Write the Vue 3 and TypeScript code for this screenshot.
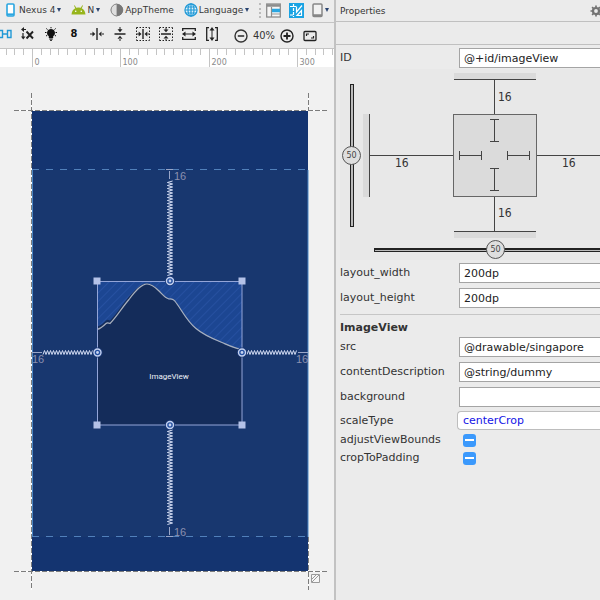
<script setup lang="ts">
import { ref } from 'vue'

interface Field {
  id: string
  label: string
  value: string
}

const componentId = ref('@+id/imageView')
const layoutFields = ref<Field[]>([
  { id: 'layout-width', label: 'layout_width', value: '200dp' },
  { id: 'layout-height', label: 'layout_height', value: '200dp' },
])
const viewFields = ref<Field[]>([
  { id: 'src', label: 'src', value: '@drawable/singapore' },
  { id: 'content-description', label: 'contentDescription', value: '@string/dummy' },
  { id: 'background', label: 'background', value: '' },
])
const flags = [
  { id: 'adjust-view-bounds', label: 'adjustViewBounds' },
  { id: 'crop-to-padding', label: 'cropToPadding' },
]
const scaleType = ref('centerCrop')
const verticalBias = ref(50)
const horizontalBias = ref(50)

// Ruler: ten minor ticks for each hundred dp
const STEP = 8.83
const ticks = Array.from({ length: 38 }, (_, i) => i - 3).map((n) => ({
  x: 32.5 + Math.round(n * STEP),
  major: n % 10 === 0,
  label: n % 10 === 0 ? String(n * 10) : '',
}))

// Zigzag spring between two points of one axis
function spring(from: number, to: number, cross: number, vertical: boolean): string {
  const points: string[] = []
  let side = 1
  for (let p = from; p <= to; p += 1.5) {
    const c = cross + side * (vertical ? 2.6 : 2)
    points.push(vertical ? `${c},${p}` : `${p},${c}`)
    side = -side
  }
  return points.join(' ')
}
const springs = [
  spring(181, 276, 170, true),
  spring(430, 525, 170, true),
  spring(43, 93, 352.5, false),
  spring(247, 297, 352.5, false),
]
const anchors = [
  [170, 281],
  [97.5, 352.5],
  [242, 352.5],
  [170, 425],
]
const corners = [
  [97, 281],
  [242, 281],
  [97, 425],
  [242, 425],
]
</script>

<template>
  <div class="ide">
    <main class="editor">
      <div class="toolbar">
        <button class="tool" type="button">
          <svg width="9" height="14" viewBox="0 0 9 14"><rect x="1" y="1" width="7" height="12" rx="1" fill="#fff" stroke="#2ba6e0" stroke-width="1.6" /><path d="M1 11.4h7" stroke="#2ba6e0" stroke-width="2" /></svg>
          <span class="after-phone">Nexus 4</span><i class="caret"></i>
        </button>
        <button class="tool" type="button">
          <svg width="15" height="10" viewBox="0 0 15 10"><path d="M.5 9.5C.8 6.3 2.200 4.300 4.300 3.200L3 .8l.7-.5L5.200 2.800a7 7 0 0 1 4.600 0L11.300.3l.7.5-1.300 2.400c2.100 1.100 3.500 3.100 3.800 6.300z" fill="#97b51b" /><circle cx="4.700" cy="6.300" r=".8" fill="#fff" /><circle cx="10.300" cy="6.300" r=".8" fill="#fff" /></svg>
          <span>N</span><i class="caret"></i>
        </button>
        <button class="tool" type="button">
          <svg width="14" height="14" viewBox="0 0 14 14"><circle cx="7" cy="7" r="5.800" fill="#b9b9b9" stroke="#8c8c8c" /><path d="M7 1a6 6 0 0 0 0 12z" fill="#dedede" stroke="#8c8c8c" /><path d="M7 1a6 6 0 0 1 0 12z" fill="#777" /></svg>
          <span>AppTheme</span>
        </button>
        <button class="tool" type="button">
          <svg width="14" height="14" viewBox="0 0 15 15" fill="none" stroke="#2199d6" stroke-width="1.300"><circle cx="7.500" cy="7.500" r="6.500" fill="#dff1fb" /><ellipse cx="7.500" cy="7.500" rx="3.200" ry="6.500" /><path d="M7.500 1v13M1 7.500h13M2 4.300h11M2 10.700h11" /></svg>
          <span>Language</span><i class="caret"></i>
        </button>
        <div class="modes">
          <button class="tool" type="button" aria-label="Design view">
            <svg width="15" height="15" viewBox="0 0 15 15"><rect x=".7" y="1" width="13.600" height="13" fill="#f6f6f6" stroke="#8d8d8d" stroke-width="1.300" /><path d="M1 2.500h13" stroke="#8d8d8d" stroke-width="2.500" /><path d="M5.500 4v10" stroke="#8d8d8d" stroke-width="1.200" /><path d="M6 7.500h8" stroke="#2ba6e0" stroke-width="3.500" /><path d="M6 11h8" stroke="#999" /></svg>
          </button>
          <button class="tool" type="button" aria-label="Blueprint view">
            <svg width="15" height="15" viewBox="0 0 15 15"><rect width="15" height="15" fill="#1aa3e3" /><path d="M1 3.500h6M4.500 1v13M1 12h3" fill="none" stroke="#fff" stroke-dasharray="3 1" stroke-width="1.200" /><path d="M7.500 3.500V9L13 2.500M8 12.500l4.500-5v5z" fill="none" stroke="#fff" stroke-width="1.200" /></svg>
          </button>
          <button class="tool" type="button" aria-label="Orientation">
            <svg width="11" height="15" viewBox="0 0 11 15"><rect x="1" y="1" width="9" height="12.500" rx="1" fill="#f1f1f1" stroke="#868686" stroke-width="1.500" /><path d="M1 12.500h9" stroke="#868686" stroke-width="2.500" /></svg>
            <i class="caret"></i>
          </button>
        </div>
      </div>

      <div class="toolbar actions">
        <button class="tool" type="button" aria-label="Show constraints">
          <svg width="12" height="12" viewBox="0 0 12 12" fill="none" stroke="#2199d6" stroke-width="1.400"><path d="M-1 2.500h3.500v7H-1M7.500 2.500h3.500v7H7.500zM2.500 6h5" /></svg>
        </button>
        <button class="tool" type="button" aria-label="Clear constraints">
          <svg width="14" height="14" viewBox="0 0 14 14" fill="none" stroke="#222"><path d="M5.500 4.500l6.500 7M12 4.500l-6.500 7" stroke-width="1.900" /><path d="M1.500 2.500h3.500M2 6v4" stroke-width="1.200" /><path d="M3 0v5L0 2.500zM0 9.500h4.500L2.200 12.500z" fill="#222" stroke="none" /></svg>
        </button>
        <button class="tool" type="button" aria-label="Infer constraints">
          <svg width="14" height="14" viewBox="0 0 14 14"><path d="M7 2a4 4 0 0 0-2.200 7.300V11h4.400V9.300A4 4 0 0 0 7 2z" fill="#111" /><path d="M5.200 12h3.600M6 13.300h2M7 0v1.300M1 5.500h1.500M11.500 5.500H13M2.300 1.500l1.200 1M11.700 1.500l-1.200 1M2 9l1.200-.7M12 9l-1.200-.7" stroke="#111" /></svg>
        </button>
        <button class="tool margin" type="button">8</button>
        <button class="tool" type="button" aria-label="Center horizontally">
          <svg width="14" height="14" viewBox="0 0 14 14" fill="#222"><path d="M6.300 1h1.400v12H6.300zM0 6.500h3v1H0zM11 6.500h3v1h-3zM2.500 4.500L5.300 7l-2.800 2.500zM11.500 4.500L8.700 7l2.800 2.500z" /></svg>
        </button>
        <button class="tool" type="button" aria-label="Center vertically">
          <svg width="14" height="14" viewBox="0 0 14 14" fill="#222"><path d="M1.500 6.300h11v1.400h-11zM6.500 0h1v3h-1zM6.500 11h1v3h-1zM4.500 2.300h5L7 5.200zM4.500 11.700h5L7 8.800z" /></svg>
        </button>
        <button class="tool" type="button" aria-label="Center horizontally in parent">
          <svg width="14" height="14" viewBox="0 0 14 14" fill="#222"><path d="M.5 .5h13M.5 13.500h13M.5 .5v13M13.500 .5v13" stroke="#222" stroke-dasharray="1.500 1.500" /><path d="M6.300 2h1.400v10H6.300zM1 6.500h2v1H1zM11 6.500h2v1h-2zM2.700 4.500L5.500 7 2.700 9.500zM11.300 4.500L8.500 7l2.800 2.500z" /></svg>
        </button>
        <button class="tool" type="button" aria-label="Center vertically in parent">
          <svg width="14" height="14" viewBox="0 0 14 14" fill="#222"><path d="M.5 .5h13M.5 13.500h13M.5 .5v13M13.500 .5v13" stroke="#222" stroke-dasharray="1.500 1.500" /><path d="M2 6.300h10v1.400H2zM6.500 1h1v2h-1zM6.500 11h1v2h-1zM4.500 2.500h5L7 5.300zM4.500 11.500h5L7 8.700z" /></svg>
        </button>
        <button class="tool" type="button" aria-label="Expand horizontally">
          <svg width="14" height="14" viewBox="0 0 14 14"><path d="M.7 4V1.700h12.600V4M.7 10v2.300h12.600V10" fill="none" stroke="#222" stroke-width="1.300" /><path d="M0 7l3.500-2.500v2h7v-2L14 7l-3.500 2.500v-2h-7v2z" fill="#222" /></svg>
        </button>
        <button class="tool" type="button" aria-label="Expand vertically">
          <svg width="14" height="16" viewBox="0 0 14 16"><path d="M4 1.700H1.700v12.600H4M10 1.700h2.300v12.600H10" fill="none" stroke="#222" stroke-width="1.300" /><path d="M7 1l2.500 3.500h-2v7h2L7 15l-2.500-3.500h2v-7h-2z" fill="#222" /></svg>
        </button>
        <div class="zoom">
          <button class="tool" type="button" aria-label="Zoom out">
            <svg width="14" height="14" viewBox="0 0 14 14" fill="none" stroke="#333"><circle cx="7" cy="7" r="6" stroke-width="1.400" /><path d="M3.800 7h6.400" stroke-width="1.600" /></svg>
          </button>
          <span>40%</span>
          <button class="tool" type="button" aria-label="Zoom in">
            <svg width="14" height="14" viewBox="0 0 14 14" fill="none" stroke="#222"><circle cx="7" cy="7" r="6" stroke-width="1.400" /><path d="M3.500 7h7M7 3.500v7" stroke-width="1.800" /></svg>
          </button>
          <button class="tool fit" type="button" aria-label="Zoom to fit">
            <svg width="14" height="12" viewBox="0 0 14 12" fill="none" stroke="#222"><rect x="1" y="1.500" width="12" height="9" rx="1" stroke-width="1.300" /><path d="M3.500 6V4h2.500M10.500 6v2H8" stroke-width="1.200" /></svg>
          </button>
        </div>
      </div>

      <div class="ruler">
        <svg width="334" height="18" viewBox="0 0 334 18">
          <template v-for="t in ticks" :key="t.x">
            <path :d="`M${t.x} 0v${t.major ? 18 : 6}`" stroke="#c4c4c4" />
            <text v-if="t.label" :x="t.x + 2" y="16" class="ruler-label">{{ t.label }}</text>
          </template>
        </svg>
      </div>

      <div class="canvas">
        <svg width="334" height="533" viewBox="0 67 334 533">
          <defs>
            <pattern id="hatch" width="6" height="6" patternUnits="userSpaceOnUse" patternTransform="rotate(45)">
              <rect width="6" height="6" fill="#1c4692" />
              <path d="M.5 0v6" stroke="#2650a0" stroke-width="1" />
            </pattern>
          </defs>
          <rect x="32" y="111" width="276" height="460" fill="#143470" />
          <rect x="32" y="170" width="276" height="367" fill="#18376f" />
          <path d="M32.500 170v367M308 170v367" stroke="#4a86c4" />
          <path d="M32 169.500h276M32 536.500h276" stroke="#5180ba" stroke-dasharray="7 7" />
          <path d="M14 110.500h313M14 571.500h313M31.500 93v497M308.500 93v18M308.500 537v53" stroke="#fff" />
          <path d="M14 110.500h313M14 571.500h313M31.500 93v497M308.500 93v18M308.500 537v53" stroke="#7c7c7c" stroke-dasharray="5 2" />

          <rect x="97" y="281" width="145" height="144" fill="#142c5a" />
          <path d="M97 281h145v69c-7-1-13-4-20-7-10-4-19-8-26-14-9-7-14-18-20-26-2-3-4-4-7-3.500-4-1-6-5-10-9-4-4-8-7-12-7-6 0-12 6-18 13-7 8-12 17-19 24-2-1-3-1-4 0-3 3-5 5-9 6z" fill="url(#hatch)" />
          <path d="M97 329.500c4-1 6-3 9-6 1-1 2-1 4 0 7-7 12-16 19-24 6-8 12-15.500 18-15.500 4 0 8 3 12 7s6 7 10 8c3-.5 5 .5 7 3.500 6 8 11 19 20 26 7 6 16 10 26 14 7 3 13 6 20 7" fill="none" stroke="#a9b0bd" stroke-width="1.200" />
          <rect x="97.500" y="281.500" width="144.500" height="143.500" fill="none" stroke="#93a5d8" />
          <text x="169" y="379" text-anchor="middle" class="view-name">ImageView</text>

          <polyline v-for="s in springs" :key="s" :points="s" fill="none" stroke="#d3dcf3" stroke-width="1" />
          <path d="M169.500 171v8M169.500 527v8M32 352.500h10M298 352.500h10M166 169.500h7M166 536.500h7" stroke="#9aa6c8" />
          <text x="174" y="180" class="distance">16</text>
          <text x="174" y="536" class="distance">16</text>
          <text x="32" y="363" class="distance">16</text>
          <text x="296" y="363" class="distance">16</text>

          <rect v-for="[x, y] in corners" :key="`c${x}-${y}`" :x="x - 3.500" :y="y - 3.500" width="7" height="7" fill="#b4c2e8" />
          <g v-for="[x, y] in anchors" :key="`a${x}-${y}`">
            <circle :cx="x" :cy="y" r="5" fill="#1c3a78" />
            <circle :cx="x" :cy="y" r="3.500" fill="#2450a0" stroke="#c5d2f0" stroke-width="1.400" />
            <circle :cx="x" :cy="y" r="1.400" fill="#c5d2f0" />
          </g>

          <path d="M311.500 574.500h8v8h-8zM312 582l7-7M312 579l4-4" fill="#f6f6f6" stroke="#9a9a9a" />
        </svg>
      </div>
    </main>

    <aside class="properties">
      <header class="title">
        <h1>Properties</h1>
        <button class="tool" type="button" aria-label="Settings">
          <svg width="12" height="12" viewBox="0 0 12 12"><circle cx="6" cy="6" r="3" fill="none" stroke="#737373" stroke-width="2.200" /><path d="M6 .5v2M6 9.500v2M.5 6h2M9.500 6h2M2.100 2.100l1.400 1.400M8.500 8.500l1.400 1.400M2.100 9.900l1.400-1.400M8.500 3.500l1.400-1.400" stroke="#737373" stroke-width="1.700" /></svg>
        </button>
      </header>
      <div class="search-strip"></div>

      <form class="form" @submit.prevent>
        <div class="row">
          <label for="component-id">ID</label>
          <input id="component-id" v-model="componentId" type="text" />
        </div>

        <div class="constraints">
          <div class="bias vertical">
            <input v-model.number="verticalBias" type="range" min="0" max="100" aria-label="Vertical bias" />
            <output :style="{ top: verticalBias + '%' }">{{ verticalBias }}</output>
          </div>
          <div class="inspector">
            <svg width="264" height="168" viewBox="362 72 264 168">
              <path d="M363 114h6v83h-6zM454 73h82v6h-82zM454 232h82v6h-82zM621 114h6v83h-6z" fill="#dadada" />
              <rect x="453.500" y="114.500" width="83" height="82" fill="#dbdbdb" stroke="#666" />
              <path d="M369.500 114v83M454 79.500h82M454 231.500h82M369 155.500h84M537 155.500h84M494.500 80v34M494.500 197v34" stroke="#444" />
              <path d="M490 119.500h9M494.500 119v22M490 141.500h9M490 168.500h9M494.500 168v22M490 190.500h9M459.500 151v9M459 155.500h22M481.500 151v9M507.500 151v9M507 155.500h22M529.500 151v9" stroke="#444" />
              <text x="498" y="101" class="margin-value">16</text>
              <text x="498" y="217" class="margin-value">16</text>
              <text x="395" y="167" class="margin-value">16</text>
              <text x="562" y="167" class="margin-value">16</text>
            </svg>
            <div class="bias horizontal">
              <input v-model.number="horizontalBias" type="range" min="0" max="100" aria-label="Horizontal bias" />
              <output :style="{ left: horizontalBias + '%' }">{{ horizontalBias }}</output>
            </div>
          </div>
        </div>

        <div class="fields">
          <div v-for="f in layoutFields" :key="f.id" class="row">
            <label :for="f.id">{{ f.label }}</label>
            <input :id="f.id" v-model="f.value" type="text" />
          </div>
        </div>

        <hr />
        <h2>ImageView</h2>

        <div class="fields">
          <div v-for="f in viewFields" :key="f.id" class="row">
            <label :for="f.id">{{ f.label }}</label>
            <input :id="f.id" v-model="f.value" type="text" />
          </div>
        </div>
        <div class="row choice">
          <label for="scale-type">scaleType</label>
          <select id="scale-type" v-model="scaleType">
            <option>centerCrop</option>
          </select>
        </div>
        <div v-for="f in flags" :key="f.id" class="row flag">
          <label :for="f.id">{{ f.label }}</label>
          <input :id="f.id" type="checkbox" :indeterminate="true" />
        </div>
      </form>
    </aside>
  </div>
</template>

<style>
body {
  background: #f1f1f1;
}
</style>

<style scoped>
.ide {
  display: grid;
  grid-template-columns: minmax(0, 334fr) minmax(0, 266fr);
  min-height: 100vh;
  overflow: hidden;
  color: #333;
  font-family: 'DejaVu Sans', sans-serif;
  font-size: 11px;
  line-height: 16px;
}

.editor {
  display: flex;
  flex-direction: column;
  background: #f1f1f1;
  overflow: hidden;
}

.toolbar {
  display: flex;
  align-items: center;
  gap: 10px;
  box-sizing: border-box;
  height: 23px;
  padding: 0 6px 2px;
  background: #ececec;
  border-bottom: 1px solid #c4c4c4;
  font-size: 9px;
  white-space: nowrap;
}

.tool {
  display: flex;
  align-items: center;
  gap: 1px;
  flex: none;
  margin: 0;
  padding: 0;
  border: 0;
  background: none;
  color: #383838;
  font: inherit;
}

.tool svg,
.canvas svg,
.ruler svg,
.inspector svg {
  display: block;
  flex: none;
}

.after-phone {
  margin-left: 3px;
}

.caret {
  margin-left: 1px;
  border: solid transparent;
  border-width: 4px 2px 0;
  border-top-color: #2b4470;
}

.modes {
  display: flex;
  align-items: center;
  gap: 8px;
  margin-left: auto;
  padding-left: 5px;
  border-left: 2px dotted #bbb;
}

.actions {
  height: 26px;
  padding: 0 0 3px;
  gap: 9px;
  font-family: 'DejaVu Sans Condensed', 'Noto Sans', sans-serif;
  font-size: 11px;
}

.margin {
  justify-content: center;
  width: 14px;
  color: #111;
  font-weight: 700;
}

.zoom {
  display: flex;
  align-items: center;
  gap: 5px;
  margin-left: 6px;
  padding-top: 3px;
}

.fit {
  margin-left: 4px;
}

.ruler {
  background: #fff;
}

.ruler-label {
  fill: #8a8a8a;
  font-size: 8px;
}

.canvas {
  flex: 1;
}

.view-name {
  fill: #eef1f7;
  font-family: Roboto, sans-serif;
  font-size: 8px;
}

.distance {
  fill: #8c90b0;
  font-family: 'Liberation Sans', sans-serif;
  font-size: 11px;
}

.properties {
  background: #ebebeb;
  border-left: 2px solid #c2c2c2;
  overflow: hidden;
}

.title {
  display: flex;
  align-items: center;
  justify-content: space-between;
  box-sizing: border-box;
  height: 22px;
  padding-left: 4px;
  border-bottom: 1px solid #c0c0c0;
}

.title .tool {
  margin-right: -2px;
}

h1 {
  margin: 0;
  font-size: 9px;
  font-weight: 500;
}

.search-strip {
  height: 22px;
  border-bottom: 1px solid #c0c0c0;
}

.form {
  padding: 3px 0 0 4px;
}

.row {
  display: grid;
  grid-template-columns: 119px minmax(0, 1fr);
  align-items: center;
  height: 20px;
}

.fields {
  display: grid;
  gap: 5px;
}

.row input[type='text'] {
  box-sizing: border-box;
  width: 100%;
  height: 20px;
  padding: 0 4px;
  border: 1px solid #a4a4a4;
  border-right: 0;
  background: #fff;
  color: #222;
  font: inherit;
}

.constraints {
  display: flex;
  gap: 1px;
  box-sizing: border-box;
  height: 191px;
  margin: 1px 0 3px;
  padding: 3px 0 0 2px;
  background: #e8e8e8;
}

.inspector {
  flex: none;
}

.bias {
  position: relative;
}

.bias.vertical {
  flex: none;
  width: 19px;
  height: 143px;
  margin-top: 12px;
}

.bias.horizontal {
  width: 242px;
  height: 19px;
  margin-left: 12px;
}

.bias input {
  display: block;
  appearance: none;
  width: 100%;
  height: 100%;
  margin: 0;
  background: none;
}

.bias.vertical input {
  writing-mode: vertical-lr;
}

.bias input::-webkit-slider-runnable-track {
  box-sizing: border-box;
  background: #bbb;
  border: 1px solid #222;
}

.bias.horizontal input::-webkit-slider-runnable-track {
  height: 4px;
  border-top-width: 2px;
}

.bias.vertical input::-webkit-slider-runnable-track {
  width: 4px;
}

.bias input::-webkit-slider-thumb {
  appearance: none;
  width: 2px;
  height: 2px;
  background: none;
}

.bias output {
  position: absolute;
  box-sizing: border-box;
  width: 19px;
  height: 19px;
  border: 1px solid #555;
  border-radius: 50%;
  background: #dedede;
  color: #444;
  font-size: 8px;
  line-height: 17px;
  text-align: center;
  pointer-events: none;
}

.bias.vertical output {
  left: 0;
  margin-top: -10px;
}

.bias.horizontal output {
  top: 0;
  margin-left: -9px;
}

.margin-value {
  fill: #333;
  font-family: 'DejaVu Sans Condensed', 'Noto Sans', sans-serif;
  font-size: 12px;
}

hr {
  margin: 6px 0 5px;
  border: 0;
  border-top: 1px solid #c6c6c6;
}

h2 {
  margin: 0 0 1px;
  font-size: 11px;
  font-weight: 700;
  line-height: 16px;
}

.choice {
  height: 19px;
  margin: 4px 0 1px;
}

select {
  appearance: none;
  box-sizing: border-box;
  height: 19px;
  margin-left: -2px;
  padding: 0 5px;
  border: 1px solid #bdbdbd;
  border-right: 0;
  border-radius: 4px 0 0 4px;
  background: #fff;
  color: #1414e6;
  font: inherit;
}

.flag {
  height: 18px;
}

.flag input {
  display: grid;
  place-items: center;
  appearance: none;
  width: 13px;
  height: 13px;
  margin: 0 0 0 4px;
  border-radius: 3px;
  background: #3b99fc;
}

.flag input:indeterminate::after {
  content: '';
  width: 9px;
  height: 2px;
  background: #fff;
}
</style>
